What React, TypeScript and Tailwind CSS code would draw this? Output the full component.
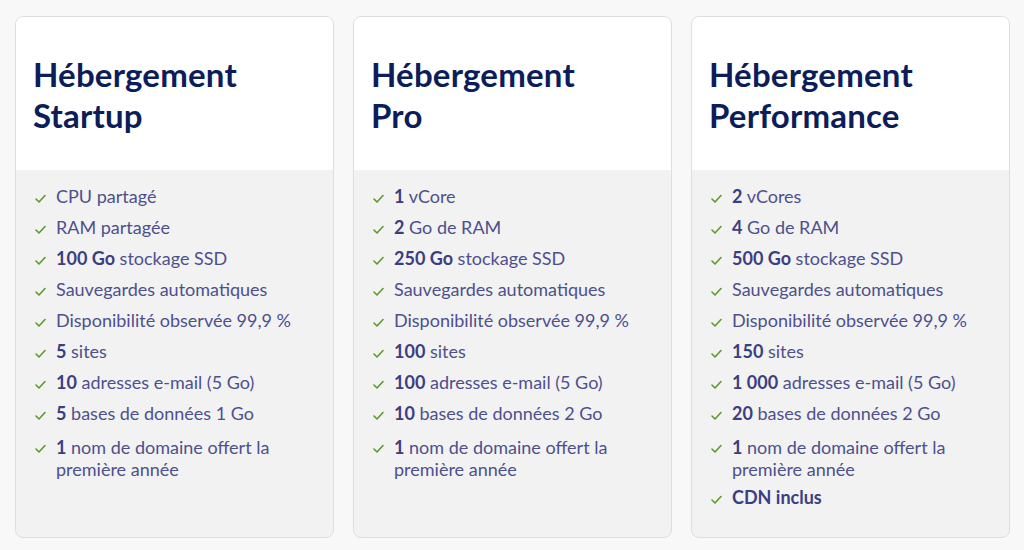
import React from "react";

type Item = { b?: string; t?: string; t2?: string; last?: boolean };

const plans: { name: string; items: Item[] }[] = [
  {
    name: "Startup",
    items: [
      { t: "CPU partagé" },
      { t: "RAM partagée" },
      { b: "100 Go", t: " stockage SSD" },
      { t: "Sauvegardes automatiques" },
      { t: "Disponibilité observée 99,9 %" },
      { b: "5", t: " sites" },
      { b: "10", t: " adresses e-mail (5 Go)" },
      { b: "5", t: " bases de données 1 Go" },
      { b: "1", t: " nom de domaine offert la", t2: "première année" },
    ],
  },
  {
    name: "Pro",
    items: [
      { b: "1", t: " vCore" },
      { b: "2", t: " Go de RAM" },
      { b: "250 Go", t: " stockage SSD" },
      { t: "Sauvegardes automatiques" },
      { t: "Disponibilité observée 99,9 %" },
      { b: "100", t: " sites" },
      { b: "100", t: " adresses e-mail (5 Go)" },
      { b: "10", t: " bases de données 2 Go" },
      { b: "1", t: " nom de domaine offert la", t2: "première année" },
    ],
  },
  {
    name: "Performance",
    items: [
      { b: "2", t: " vCores" },
      { b: "4", t: " Go de RAM" },
      { b: "500 Go", t: " stockage SSD" },
      { t: "Sauvegardes automatiques" },
      { t: "Disponibilité observée 99,9 %" },
      { b: "150", t: " sites" },
      { b: "1 000", t: " adresses e-mail (5 Go)" },
      { b: "20", t: " bases de données 2 Go" },
      { b: "1", t: " nom de domaine offert la", t2: "première année" },
      { b: "CDN inclus", last: true },
    ],
  },
];

function Check() {
  return (
    <svg width="11" height="9" viewBox="0 0 11 9" className="shrink-0">
      <path d="M1 5 L4 8 L10 1.5" fill="none" stroke="#5b9a2c" strokeWidth="1.6" strokeLinecap="round" strokeLinejoin="round" />
    </svg>
  );
}

export default function App() {
  return (
    <div
      className="w-[1024px] h-[550px] bg-[#f8f8f8] flex gap-[19px] pl-[15px] pr-[14px] pt-[16px] pb-[12px] overflow-hidden"
      style={{ fontFamily: "Lato, 'Noto Sans', sans-serif" }}
    >
      {plans.map((p) => (
        <div
          key={p.name}
          className="flex-1 flex flex-col rounded-[8px] border border-[#dedede] overflow-hidden bg-[#f2f2f2]"
        >
          <div className="bg-white h-[153px] shrink-0 px-[17px] pt-[37px]">
            <h2 className="text-[33px] leading-[41px] font-bold text-[#0c1d5a] tracking-[0.2px]">
              Hébergement
              <br />
              {p.name}
            </h2>
          </div>
          <ul className="flex flex-col pl-[19px] pr-[12px] pt-[16px]">
            {p.items.map((it, i) => (
              <li
                key={i}
                className={`flex gap-[10px] text-[18px] text-[#4d508d] ${
                  it.t2
                    ? "items-start mt-[13px] leading-[22px]"
                    : it.last
                    ? "items-center mt-[7px] leading-[20px]"
                    : "items-center mt-[11px] leading-[20px]"
                } ${i === 0 ? "!mt-0" : ""}`}
              >
                <span className={`flex ${it.t2 ? "pt-[8px]" : "pt-[4px]"}`}>
                  <Check />
                </span>
                <div className="flex flex-col">
                  <span>
                    {it.b && <b className="font-bold text-[#3b3e80]">{it.b}</b>}
                    {it.t}
                  </span>
                  {it.t2 && <span>{it.t2}</span>}
                </div>
              </li>
            ))}
          </ul>
        </div>
      ))}
    </div>
  );
}
